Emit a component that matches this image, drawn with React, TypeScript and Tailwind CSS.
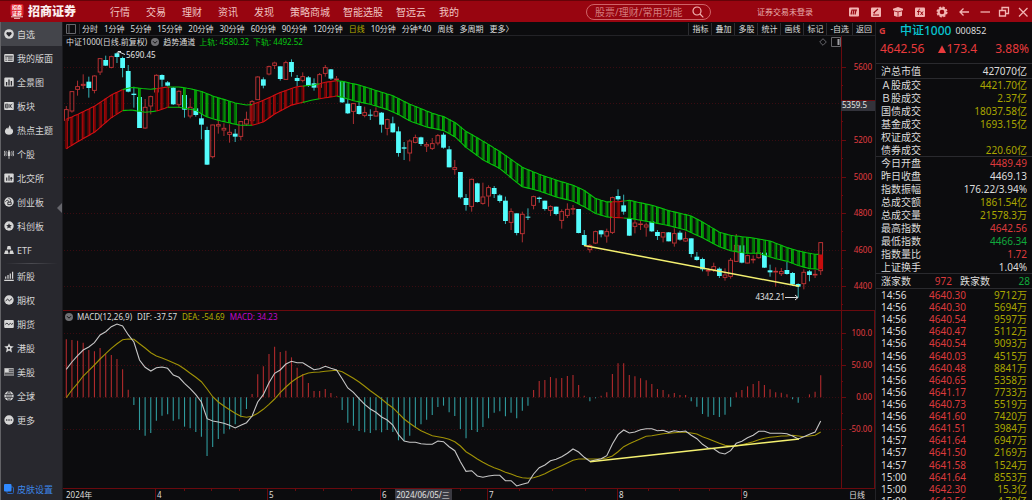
import React from "react";

const RED = "#c63436";
const CYAN = "#54fcfc";
const AXIS = "#6a0a0e";

/* ---------- price and indicator data (y values are in thirds of a pixel) ---------- */

type Candle = { up: boolean; high: number; top: number; bottom: number; low: number };

const parse = (base: number, text: string): Candle[] =>
  text
    .trim()
    .split(/\s*[;\n]\s*/)
    .map((row) => {
      const [kind, ...v] = row.split(" ");
      const [high, top, bottom, low] = v.map((n) => (base + Number(n)) / 3);
      return { up: kind === "r", high, top, bottom, low };
    });

const candles: Candle[] = [
  ...parse(
    135,
    `r 183 193 227 227;r 139 139 199 203;r 107 124 134 152;r 88 117 122 132;c 95 110 129 158;r 90 92 137 145
r 40 40 82 90;c 32 45 62 63;r 32 34 68 70;c 22 25 36 54;c 35 39 69 97;c 60 78 140 142;c 125 146 150 188
c 156 156 249 249;r 162 186 250 252;r 152 154 184 208;r 88 90 142 143;c 88 90 104 125;c 108 112 122 124
c 126 128 178 180;r 136 138 180 188;c 140 150 194 218;r 160 186 214 220;c 175 190 210 215;c 200 220 239 283
c 245 255 359 360;r 238 239 336 340;r 225 238 244 266;r 235 249 256 273;r 238 261 269 293;c 252 266 275 291
r 228 229 275 286;r 200 222 238 243;r 165 169 228 232;r 93 95 165 165;c 97 103 122 130;r 62 64 88 91
r 50 53 62 72;c 64 64 102 107;r 47 52 104 105;c 43 51 81 95;c 90 99 108 124;r 82 94 107 112;c 93 97 122 126
c 100 115 128 137;r 84 88 128 130;r 60 67 86 95;c 72 73 101 105;r 93 101 105 110`,
  ),
  ...parse(
    240,
    `c 4 4 67 69;c 55 71 100 102;r 69 70 95 132;c 66 78 102 104;r 80 97 107 112;c 88 104 107 120;r 82 94 109 110
c 96 98 134 158;r 116 118 146 166;c 110 130 157 158;c 140 154 219 230;c 186 202 206 240;r 178 182 220 244
r 164 172 188 190;c 170 172 192 198;r 186 193 199 216;r 174 190 206 210;r 162 166 190 196;c 158 164 203 206
c 198 208 262 262;r 240 262 269 284;c 276 276 352 356;c 342 354 375 392;r 296 297 380 395;c 308 310 366 368
r 308 350 371 374;r 316 322 349 380;c 318 324 342 354;c 342 346 363 368;c 350 362 423 432;r 385 394 428 450
c 400 400 459 466;r 395 402 462 487;c 385 410 413 420;r 347 349 377 388;c 350 353 357 368;c 362 362 387 392
r 376 379 392 408;c 380 380 402 406;r 388 394 422 446;r 370 387 407 414;r 375 385 388 404;c 387 387 459 460`,
  ),
  ...parse(
    510,
    `c 180 195 225 228;r 222 226 240 248;r 182 184 220 222;c 180 181 193 202;r 176 184 199 218;r 80 82 188 192
c 58 78 88 92;c 74 106 125 134;c 145 145 197 198;r 150 158 170 190;r 148 161 164 180;r 158 164 172 200
c 152 154 184 186;c 180 186 198 210;r 186 187 202 217;c 186 187 214 214;r 175 190 220 230;c 182 188 209 212
r 185 205 214 216;c 205 205 252 262;c 246 260 270 272;c 263 267 298 304;r 294 300 304 318;r 278 289 300 306
c 292 296 318 324;r 295 314 323 332;r 264 270 320 326;r 192 225 275 276;c 226 226 278 280;r 254 256 280 281
r 256 267 270 280;r 236 247 264 266;c 246 248 293 294;c 284 301 307 320;r 292 303 307 350;r 294 304 312 318
c 276 300 312 314;c 306 309 343 348;c 340 342 350 383;r 298 306 342 358;c 300 304 315 334;r 300 312 316 324
r 216 217 303 315`,
  ),
];

const xOf = (i: number) => 66.3 + i * 5.63;

const points = (ox: number, oy: number, list: number[][]) =>
  list.map(([x, y]) => [ox + x / 3, oy + y / 3]);

const bandTop = [
  ...points(60, 45, [[10, 227], [19, 223], [53, 208], [103, 184], [154, 150], [187, 134], [215, 127], [272, 133], [323, 126], [357, 126], [390, 131], [424, 139], [458, 153], [491, 163], [526, 174], [559, 180], [576, 179], [610, 166], [661, 142], [711, 125], [762, 120], [796, 112], [830, 107]]),
  ...points(340, 80, [[7, 4], [57, 15], [107, 31], [158, 47], [192, 64], [210, 73], [243, 86], [277, 100], [311, 110], [346, 128], [378, 154], [430, 184], [480, 215], [513, 238], [547, 262], [598, 283], [648, 300], [700, 316]]),
  ...points(580, 170, [[12, 61], [46, 85], [81, 96], [115, 95], [148, 91], [217, 106], [267, 122], [334, 138], [369, 157], [419, 187], [452, 196], [520, 204], [570, 213], [622, 233], [656, 243], [704, 253], [740, 254]]),
];
const bandBottom = [
  ...points(60, 45, [[10, 315], [19, 311], [53, 290], [103, 262], [154, 218], [187, 197], [215, 195], [256, 202], [290, 198], [323, 187], [357, 187], [407, 196], [441, 216], [475, 226], [540, 241], [576, 241], [610, 231], [644, 207], [695, 180], [762, 164], [830, 153]]),
  ...points(340, 80, [[7, 52], [40, 62], [91, 73], [141, 88], [176, 104], [210, 123], [260, 141], [311, 152], [346, 171], [378, 202], [430, 240], [480, 266], [530, 307], [547, 320], [598, 333], [648, 351], [700, 364]]),
  ...points(580, 170, [[12, 110], [46, 130], [81, 141], [115, 143], [148, 145], [217, 157], [267, 167], [317, 180], [369, 204], [419, 231], [452, 242], [500, 250], [537, 250], [587, 266], [622, 274], [656, 287], [689, 296], [740, 299]]),
];

const yAt = (line: number[][], x: number) => {
  for (let k = 1; k < line.length; k++) {
    if (x <= line[k][0]) {
      const [x0, y0] = line[k - 1];
      const [x1, y1] = line[k];
      return y0 + ((y1 - y0) * (x - x0)) / (x1 - x0);
    }
  }
  return line[line.length - 1][1];
};

const runs: { from: number; to: number; up: boolean }[] = [
  { from: 0, to: 10, up: true },
  { from: 10, to: 16, up: false },
  { from: 16, to: 18, up: true },
  { from: 18, to: 33, up: false },
  { from: 33, to: 42, up: true },
  { from: 42, to: 45, up: false },
  { from: 45, to: 48, up: true },
  { from: 48, to: 97, up: false },
  { from: 97, to: 99, up: true },
  { from: 99, to: 133.6, up: false },
];
const unfilled = new Set([11, 12, 14, 15, 19, 20, 22, 31, 32, 43, 44, 99]);
const redFilled = (i: number) =>
  i <= 10 || (i >= 16 && i <= 18) || (i >= 33 && i <= 42) || (i >= 45 && i <= 48) || i === 97 || i === 98 || i === 134;

const bandPath = (line: number[][], from: number, to: number) => {
  const out: string[] = [];
  for (let i = from; i < to; i += 0.5) out.push(`${xOf(i).toFixed(1)},${yAt(line, xOf(i)).toFixed(1)}`);
  out.push(`${xOf(to).toFixed(1)},${yAt(line, xOf(to)).toFixed(1)}`);
  return out.join(" ");
};

const nums = (s: string) => s.trim().split(/\s+/).map((n) => 310 + Number(n) / 3);

const hist = nums(`88 90 92 98 120 124 114 132 135 147 178 239 285 360 377 369 332 317 313 332 328 350 355 366 380 438
411 387 371 358 343 322 297 252 193 169 132 110 126 122 142 173 192 219 243 243 237 249 259 300 338 347 363 367 369
361 367 360 366 391 393 377 352 343 329 315 291 287 307 318 357 385 360 366 351 325 308 304 319 308 325 302 287 240
213 210 201 205 204 198 195 225 257 274 265 257 247 192 160 160 195 199 205 211 222 237 240 253 249 255 255 274 290
312 320 315 321 314 290 247 240 229 222 213 225 238 247 248 253 268 278 262 253 245 196`);

const dif = nums(`178 156 137 120 111 98 75 65 50 42 48 74 96 150 172 183 173 171 175 195 202 220 236 254 276 326 333
336 340 346 354 346 338 318 276 254 218 190 180 162 154 158 158 169 179 176 169 175 180 206 234 247 266 283 297 307
321 330 345 374 393 397 397 401 403 403 393 395 410 422 455 484 482 498 502 498 496 496 512 512 528 523 518 492 473
465 452 448 440 430 417 426 442 454 450 446 437 402 374 360 369 366 359 356 356 362 361 367 362 365 363 376 386 403
414 416 428 432 422 400 394 383 376 364 364 370 370 370 371 378 387 380 373 366 333`);

const dea = nums(`263 240 220 198 182 165 147 131 115 101 89 87 88 101 114 128 138 144 151 158 166 177 190 202 215 237
260 276 288 299 310 319 322 319 310 298 283 267 248 231 216 204 195 189 187 186 184 182 181 185 195 205 216 229 242
254 267 281 293 310 327 340 352 362 370 377 380 383 388 395 408 425 436 447 457 466 473 479 487 492 499 503 505 503
498 491 482 475 467 459 451 447 447 447 447 446 444 438 425 410 401 394 386 379 377 374 371 370 368 367 367 369 372
380 386 393 400 406 408 408 404 400 395 389 385 382 380 378 378 376 378 380 378 376 366`);

const linePoints = (v: number[]) => v.map((y, i) => `${xOf(i).toFixed(1)},${y.toFixed(1)}`).join(" ");

const textFont = "font-['Noto_Sans','Noto_Sans_CJK_SC',sans-serif]";

/* ---------- charts ---------- */

function PriceChart() {
  const levels: [number, string][] = [
    [67, "5600"], [103, ""], [140, "5200"], [177, "5000"], [213, "4800"], [250, "4600"], [286, "4400"],
  ];
  return (
    <svg viewBox="63 48 812 262" className="block w-full" role="img" aria-label="日线">
      {levels.map(([y, label]) => (
        <g key={y}>
          <line x1="64" x2="841" y1={y + 0.5} y2={y + 0.5} stroke="#4a0c12" strokeWidth="1" strokeDasharray="1 2" opacity="0.75" />
          <line x1="841" x2="846" y1={y + 0.5} y2={y + 0.5} stroke={AXIS} />
          <line x1="841" x2="843" y1={y + 18.5} y2={y + 18.5} stroke={AXIS} />
          {label && (
            <text x="872" y={y + 3} textAnchor="end" fontSize="8" fill="#e03c40">
              {label}
            </text>
          )}
        </g>
      ))}
      <line x1="841.5" x2="841.5" y1="48" y2="310" stroke={AXIS} />
      <rect x="841" y="100" width="34" height="11" fill="#33333b" />
      <line x1="841" x2="875" y1="100.5" y2="100.5" stroke={AXIS} />
      <text x="842" y="108" fontSize="8" fill="#e4e4e4">5359.5</text>

      {candles.map((c, i) => {
        const x = xOf(i);
        const h = Math.max(c.bottom - c.top, 1);
        return c.up ? (
          <g key={i} stroke={RED} fill="none">
            <line x1={x} x2={x} y1={c.high} y2={c.top} opacity="0.85" />
            <line x1={x} x2={x} y1={c.bottom} y2={c.low} opacity="0.85" />
            <rect x={x - 1.9} y={c.top + 0.3} width="3.8" height={Math.max(h - 0.6, 0.6)} strokeWidth="0.9" />
          </g>
        ) : (
          <g key={i}>
            <line x1={x} x2={x} y1={c.high} y2={c.low} stroke="#35b4b8" />
            <rect x={x - 2.4} y={c.top} width="4.8" height={h} fill={CYAN} />
          </g>
        );
      })}

      {candles.map((_, i) => {
        if (unfilled.has(i)) return null;
        const x = xOf(i);
        const y0 = yAt(bandTop, x);
        const y1 = yAt(bandBottom, x);
        const red = redFilled(i);
        const last = i === 134;
        const wide = i % 2 === 0;
        return (
          <g key={i}>
            <rect
              x={last ? x - 2.3 : x - 1.4}
              y={y0}
              width={last ? 4.6 : 2.8}
              height={y1 - y0}
              fill={red ? (last ? "#c80d0d" : wide ? "#620506" : "#780506") : wide ? "#036a05" : "#049206"}
            />
            {!last && <rect x={x + (wide ? 0.6 : -1.4)} y={y0} width="0.9" height={y1 - y0} fill={red ? "#b40a0c" : "#05b009"} />}
          </g>
        );
      })}
      {runs.map((r) => (
        <g key={r.from} fill="none" stroke={r.up ? "#d10f12" : "#07c20b"} strokeWidth="1.1">
          <polyline points={bandPath(bandTop, r.from, r.to)} />
          <polyline points={bandPath(bandBottom, r.from, r.to)} />
        </g>
      ))}

      <line x1="584" y1="245.5" x2="799" y2="286.3" stroke="#f4f070" strokeWidth="1.5" />
      <g stroke="#dcdcdc" fill="none" strokeWidth="1">
        <path d="M118 51.5 L125 54.5 M118 54.5 V51.5 H121" />
        <path d="M785 297.5 H798 M795 295 L798 297.5 L795 300" />
      </g>
      <text x="126" y="58" fontSize="8" fill="#e4e4e4">5690.45</text>
      <text x="785" y="300" textAnchor="end" fontSize="8" fill="#e4e4e4">4342.21</text>
    </svg>
  );
}

function MacdChart() {
  const levels: [number, string][] = [
    [333, "100.0"], [365, "50.00"], [397, "0.00"], [429, "-50.00"],
  ];
  return (
    <svg viewBox="63 322 812 167" className="block w-full" role="img" aria-label="MACD">
      {levels.map(([y, label]) => (
        <g key={y}>
          <line x1="64" x2="841" y1={y + 0.5} y2={y + 0.5} stroke="#4a0c12" strokeDasharray="1 2" opacity="0.75" />
          <line x1="841" x2="846" y1={y + 0.5} y2={y + 0.5} stroke={AXIS} />
          <line x1="841" x2="843" y1={y + 16.5} y2={y + 16.5} stroke={AXIS} />
          <text x="872" y={y + 3} textAnchor="end" fontSize="8" fill="#e03c40">
            {label}
          </text>
        </g>
      ))}
      {hist.map((y, i) => (
        <line
          key={i}
          x1={xOf(i)}
          x2={xOf(i)}
          y1="397.3"
          y2={y}
          stroke={y < 397.3 ? "#b02a2c" : "#2f9a9d"}
          strokeWidth="1.1"
        />
      ))}
      <polyline points={linePoints(dea)} fill="none" stroke="#a09206" strokeWidth="1.1" />
      <polyline points={linePoints(dif)} fill="none" stroke="#c6c6c6" strokeWidth="1.1" />
      <line x1="590" y1="461.7" x2="799" y2="439" stroke="#f4f070" strokeWidth="1.5" />
      <path d="M841.5 322 V488.5 M63 488.5 H875 M874.5 322 V488.5" stroke={AXIS} fill="none" />
    </svg>
  );
}

function DateAxis() {
  const months: [number, string][] = [[156, "4"], [268, "5"], [381, "6"], [488, "7"], [618, "8"], [742, "9"]];
  const minor = [185, 212, 240, 296, 324, 352, 461, 520, 553, 586, 649, 680, 710];
  return (
    <svg viewBox="63 489 812 11" className="block w-full" role="img" aria-label="日期">
      <text x="66" y="498" fontSize="8" fill="#dcdcdc">2024年</text>
      {months.map(([x, label]) => (
        <g key={label}>
          <line x1={x - 0.5} x2={x - 0.5} y1="489" y2="500" stroke={AXIS} />
          <text x={x + 1} y="498" fontSize="8" fill="#dcdcdc">{label}</text>
        </g>
      ))}
      {minor.map((x) => (
        <line key={x} x1={x - 0.5} x2={x - 0.5} y1="489" y2="491" stroke={AXIS} />
      ))}
      <rect x="395" y="489" width="57" height="11" fill="#3a3a42" />
      <text x="423" y="498" textAnchor="middle" fontSize="8" fill="#e4e4e4">2024/06/05/三</text>
      <text x="849" y="498" fontSize="8" fill="#dcdcdc">日线</text>
    </svg>
  );
}

/* ---------- sidebar ---------- */

const K = "#28282e";
const icons: Record<string, React.ReactNode> = {
  自选: (<><circle cx="5" cy="5" r="4.8" /><path fill={K} d="M5 7.8 2.6 5.3a1.4 1.4 0 0 1 2.4-1.7 1.4 1.4 0 0 1 2.4 1.7z" /></>),
  我的版面: (<><rect x="0.2" y="1" width="9.6" height="8" rx="1" /><path stroke={K} strokeWidth="0.9" d="M1.2 3.2h7.6M1.4 5h1.4M3.8 5h4.8M1.4 7.2h1.4M3.8 7.2h4.8" /></>),
  全景图: (<><rect x="0.3" y="0.6" width="9.4" height="9" rx="1.2" /><path stroke={K} strokeWidth="1.3" d="M2.6 8.6V5M5 8.6V2.6M7.4 8.6V4" /></>),
  板块: (<><rect x="0.2" y="1" width="9.6" height="8" rx="0.8" /><path stroke={K} strokeWidth="0.8" fill="none" d="M1.6 3.2h2.5v3.6H1.6zM1.6 5h2.5M5.9 3v4M8.3 3 6 5l2.3 2" /></>),
  热点主题: (<path d="M5.2.2C5.6 2 4 2.6 4.2 4 3.4 3.6 3.4 2.9 3.4 2.6 1.6 4 .9 5.2.9 6.5.9 8.5 2.8 9.8 5 9.8s4.1-1.3 4.1-3.3c0-1.4-.6-2.4-1.4-3.3 0 .6-.3 1-.8 1.2C7.1 2.6 6.5 1 5.2.2z" />),
  个股: (<><rect x="3.8" y="2.6" width="2.4" height="4.4" rx=".4" /><path stroke="#d6d6d6" strokeWidth=".9" fill="none" d="M5 1v8.8M2.4 2.4C1.7 3.8 1.7 5.2 2.4 6.6M.9 1.8C-.1 3.8.1 5.8 1 7.2M7.6 2.4c.7 1.4.7 2.8 0 4.2M9.1 1.8c1 2 .8 4-.1 5.4" /></>),
  北交所: (<><rect x="0.3" y="0.6" width="9.4" height="9" rx="1" /><path stroke={K} strokeWidth="1.1" d="M2.7 7.8V4.4M5 7.8V2.6M7.2 7.8V4M6.2 5.4h2.2" /></>),
  创业板: (<><circle cx="5" cy="5" r="4.7" /><path stroke={K} strokeWidth=".9" fill="none" d="M1.4 4.6C3 2.6 4.8 3 4.8 5.2M4.4 1.2C6.4 2 7.6 3.4 6.4 5M3.8 5.2h3.4v2.4H3.8z" /></>),
  科创板: (<><circle cx="5" cy="5" r="4.7" /><path fill={K} d="M5 2.2l.8 1.8 2 .2-1.5 1.3.5 2L5 6.4 3.2 7.5l.5-2L2.2 4.2l2-.2z" /></>),
  ETF: (<path d="M3.6 1h2.8l.9 3.4H2.7zM1.2 5.4h2.6L4.7 9H.1zM6.2 5.4h2.6L9.9 9H5.3z" />),
  新股: (<path stroke="#d6d6d6" strokeWidth="1.2" d="M.2 9.3h9.6M1.7 7.8V5.4M4 7.8V4M6.3 7.8V2.6M8.6 7.8V.8" />),
  期权: (<><circle cx="5" cy="5" r="4.7" /><path stroke={K} strokeWidth="1" fill="none" d="M1.6 5.9 3.6 4.2 5.4 5.8 8 3.6" /></>),
  期货: (<><rect x="0.2" y="1" width="9.6" height="8" rx="1" /><path stroke={K} strokeWidth=".9" fill="none" d="M1.2 5.4 3 4l1.6 1.8L6.4 4.4l1.2 1L9 4.3" /></>),
  港股: (<><path d="M5 .2l1.3 2.9 3.5.3-2.6 2.2.8 3.8L5 7.4 2 9.4l.8-3.8L.2 3.4l3.5-.3z" /><circle cx="5" cy="5.2" r="1.1" fill={K} /></>),
  美股: (<><rect x="0.2" y="1" width="9.6" height="8" rx=".6" opacity=".75" /><path stroke={K} strokeWidth=".7" d="M5 2.8h4.4M5 4.6h4.4M.8 6.4h8.6M.8 8h8.6" /><rect x="1" y="1.8" width="3.4" height="3.2" /></>),
  全球: (<><circle cx="5" cy="5" r="4.7" /><path stroke={K} strokeWidth=".7" fill="none" d="M.4 3.6h9.2M.4 6.4h9.2M5 .3v9.4M5 .3C2.2 3 2.2 7 5 9.7 7.8 7 7.8 3 5 .3" /></>),
  更多: (<><circle cx="5" cy="5" r="4.7" /><g fill={K}><circle cx="2.7" cy="5" r=".8" /><circle cx="5" cy="5" r=".8" /><circle cx="7.3" cy="5" r=".8" /></g></>),
};

function SideItem({ name, active = false }: { name: string; active?: boolean }) {
  return (
    <button className={`flex h-6 w-full shrink-0 items-center gap-[3px] pl-[3px] text-[9px] leading-none text-[#d6d6d6] ${active ? "bg-[#44454b]" : ""}`}>
      <svg viewBox="0 0 10 10" className="size-[10px] shrink-0" fill="#d6d6d6" aria-hidden="true">{icons[name]}</svg>
      <span className="whitespace-nowrap">{name}</span>
    </button>
  );
}

function Sidebar() {
  return (
    <aside className="relative flex w-[63px] shrink-0 flex-col border-r border-l border-r-[#1b1b1f] border-l-[#626266] bg-[#28282e]">
      {["自选", "我的版面", "全景图", "板块", "热点主题", "个股", "北交所", "创业板", "科创板", "ETF"].map((n) => (
        <SideItem key={n} name={n} active={n === "自选"} />
      ))}
      <div className="mx-1 mt-px h-px shrink-0 bg-gradient-to-r from-transparent via-[#4a4a50] to-transparent" />
      {["新股", "期权", "期货", "港股", "美股", "全球", "更多"].map((n) => (
        <SideItem key={n} name={n} />
      ))}
      <button className="mt-auto flex h-[22px] shrink-0 items-center gap-[3px] pl-[3px] text-[9px] leading-none text-[#3c86e8]">
        <svg viewBox="0 0 10 10" className="size-[10px] shrink-0" aria-hidden="true">
          <rect x="3" y="3" width="6.5" height="6.5" rx="1" fill="none" stroke="#2a62b8" />
          <rect x="0" y="0" width="7.5" height="7.5" rx="1" fill="#3089ff" />
        </svg>
        <span className="whitespace-nowrap">皮肤设置</span>
      </button>
      <button aria-label="收起" className="absolute top-[181px] right-0">
        <svg viewBox="0 0 5 10" className="h-[10px] w-[5px]" aria-hidden="true"><path d="M5 0v10L0 5z" fill="#66666c" /></svg>
      </button>
    </aside>
  );
}

/* ---------- header ---------- */

const P = "#f2b4b2";
const A = "#980510";
const windowIcons: [string, string, React.ReactNode][] = [
  ["行情", "w-[22px]", <><rect x="1" y="1.5" width="10" height="9" rx="1" fill={P} /><path stroke={A} strokeWidth="1.2" fill="none" d="M3 8.5 4 4h2L5 8.5M6 4h3M8 4 7 8.5" /></>],
  ["编辑", "w-[22px]", <><rect x="1" y="1.5" width="10" height="9.5" rx="1" fill={P} /><path stroke={A} strokeWidth="1.1" fill="none" d="M3.5 7 8 3M3 9h6M3.5 7h1.5" /></>],
  ["工具箱", "w-[22px]", <><path d="M6 1l5 1.800v1.400L6 5.600 1 4.200V2.800zM2 5.300l3.600 1V11L2 9.800zM10 5.300l-3.600 1V11L10 9.800z" fill={P} /></>],
  ["公式", "w-[22px]", <><rect x="1" y="1.5" width="10" height="9.5" rx="1" fill={P} /><path stroke={A} strokeWidth="1" fill="none" d="M6 3.2C4.6 3 4.6 4.2 4.3 9M3 5.5h2.800M6.500 5.500l2.500 3.500M9 5.500 6.500 9" /></>],
  ["设置", "w-[22px]", <><circle cx="6" cy="6" r="3.4" fill="none" stroke={P} strokeWidth="2.2" /><circle cx="6" cy="6" r="4.800" fill="none" stroke={P} strokeWidth="1.500" strokeDasharray="2.200 1.570" /></>],
  ["返回", "w-[22px]", <path stroke={P} strokeWidth="1.3" fill="none" d="M11 6H2M5.500 2.500 2 6l3.500 3.500" />],
  ["最小化", "w-[19px]", <path stroke={P} strokeWidth="1.300" d="M1.500 6h9.500" />],
  ["还原", "w-[19px]", <path stroke={P} strokeWidth="1.300" fill="none" d="M1.500 4.500h6V10h-6zM4 4.500V1.500h6.500v6H7.500" />],
  ["关闭", "w-[19px]", <path stroke={P} strokeWidth="1.300" d="M2 2l8.500 8.500M10.500 2 2 10.500" />],
];

function Header() {
  return (
    <header className="flex h-[22px] shrink-0 items-center border-t border-[#650308] bg-[#980510] text-[10px] leading-none text-[#f0c4c2]">
      <div className="flex w-[110px] shrink-0 items-center gap-1 pl-[10px]">
        <svg viewBox="0 0 14 15" className="h-[15px] w-[14px]" aria-hidden="true">
          <rect x="0.5" y="0" width="13" height="12" rx="2" fill="#e0202c" />
          <text x="7" y="5.2" textAnchor="middle" fontSize="5" fontWeight="700" fill="#fff">招商</text>
          <text x="7" y="11" textAnchor="middle" fontSize="5" fontWeight="700" fill="#fff">证券</text>
          <path d="M1 12.8h12M4 14.3h6" stroke="#f3cfcd" strokeWidth="1" />
        </svg>
        <span className="text-[12px] font-black whitespace-nowrap text-[#fbeeee]">招商证券</span>
      </div>
      <nav className="flex items-center gap-4 whitespace-nowrap">
        {["行情", "交易", "理财", "资讯", "发现"].map((n) => (
          <button key={n}>{n}</button>
        ))}
        <div className="flex items-center gap-[13px]">
          {["策略商城", "智能选股", "智远云", "我的"].map((n) => (
            <button key={n}>{n}</button>
          ))}
        </div>
      </nav>
      <label className="mr-[46px] ml-auto flex h-4 w-[125px] items-center rounded-full border border-[#cf6468] pr-[6px] pl-2">
        <input aria-label="搜索" placeholder="股票/理财/常用功能" className="w-0 flex-1 bg-transparent text-[10px] leading-none outline-none placeholder:text-[#d37a7c]" />
        <svg viewBox="0 0 12 12" className="size-3 shrink-0" fill="none" stroke={P} strokeWidth="1.2" aria-hidden="true">
          <circle cx="5" cy="5" r="4" /><path d="M8 8l3.3 3.3" />
        </svg>
      </label>
      <button className="mr-[30px] text-[8px] whitespace-nowrap text-[#e8b0ae]">证券交易未登录</button>
      <div className="flex">
        {windowIcons.map(([label, width, art]) => (
          <button key={label} aria-label={label} className={`flex justify-center ${width}`}>
            <svg viewBox="0 0 12 12" className="size-3" aria-hidden="true">{art}</svg>
          </button>
        ))}
      </div>
    </header>
  );
}

function Toolbar() {
  const periods = ["分时", "1分钟", "5分钟", "15分钟", "20分钟", "30分钟", "60分钟", "90分钟", "120分钟", "日线", "10分钟", "分钟*40", "周线", "多周期", "更多〉"];
  const tools = ["指标", "叠加", "多股", "统计", "画线", "标记", "-自选", "返回"];
  return (
    <div className="flex h-[14px] shrink-0 items-center border-b border-[#232327] text-[8px] leading-none whitespace-nowrap text-[#dcdcdc]">
      <button aria-label="布局" className="flex w-[17px] justify-center border-r border-[#2c2c30]">
        <svg viewBox="0 0 10 10" className="size-[10px]" fill="none" stroke="#66666b" aria-hidden="true"><path d="M.5.5h9v9h-9zM3 .5v9" /></svg>
      </button>
      <div className="flex gap-[6px] pl-[2px]">
        {periods.map((p) => (
          <button key={p} className={p === "日线" ? "text-[#b6ac00]" : ""}>{p}</button>
        ))}
      </div>
      <div className="ml-auto flex">
        {tools.map((t) => (
          <button key={t} className="border-l border-[#2c2c30] px-[3px] py-[2px]">{t}</button>
        ))}
      </div>
    </div>
  );
}

const Chevron = () => (
  <svg viewBox="0 0 8 8" className="size-2 shrink-0" aria-hidden="true">
    <circle cx="4" cy="4" r="4" fill="#707074" /><path d="M2 3.2 4 5.2 6 3.2" stroke="#111" fill="none" />
  </svg>
);

/* ---------- quote panel ---------- */

const W = "text-[#dcdcdc]";
const Y = "text-[#aaa600]";
const R = "text-[#dc3a3c]";
const G = "text-[#10a83c]";

function Rows({ rows, className }: { rows: [string, string, string][]; className: string }) {
  return (
    <table className={`w-full shrink-0 border-b border-[#2a2a2e] ${className}`}>
      <tbody>
        {rows.map(([label, value, tone]) => (
          <tr key={label}>
            <th scope="row" className="py-0 pl-[5px] text-left font-normal text-[#dcdcdc]">{label}</th>
            <td className={`py-0 pr-[5px] text-right ${tone}`}>{value}</td>
          </tr>
        ))}
      </tbody>
    </table>
  );
}

const trades: [string, string, string][] = [
  ["14:56", "4640.30", "9712万"], ["14:56", "4640.30", "5694万"], ["14:56", "4640.54", "9597万"],
  ["14:56", "4640.47", "5112万"], ["14:56", "4640.54", "9093万"], ["14:56", "4640.03", "4515万"],
  ["14:56", "4640.48", "8841万"], ["14:56", "4640.65", "5358万"], ["14:56", "4641.17", "7733万"],
  ["14:56", "4640.73", "5519万"], ["14:56", "4641.60", "7420万"], ["14:56", "4641.51", "3984万"],
  ["14:57", "4641.64", "6947万"], ["14:57", "4641.50", "2169万"], ["14:57", "4641.58", "1524万"],
  ["15:00", "4641.64", "8553万"], ["15:00", "4642.30", "15.3亿"], ["15:00", "4642.56", "4.79亿"],
];

function QuotePanel() {
  return (
    <aside className="flex w-[157px] shrink-0 flex-col overflow-hidden border-l border-[#232327] text-[10px] leading-[12px] whitespace-nowrap">
      <div className="flex h-[17px] shrink-0 items-center pl-[3px]">
        <span className="w-[21px] text-[9px] font-bold text-[#dc3a3c]">G</span>
        <h1 className="text-[12px] font-medium text-[#08c4d0]">中证1000</h1>
        <span className={`pl-1 text-[9px] ${W}`}>000852</span>
      </div>
      <div className="flex h-[25px] shrink-0 items-center justify-between border-b border-[#2a2a2e] pr-[3px] pb-[4px] pl-[4px] text-[12px] text-[#e83a3c]">
        <span>4642.56</span>
        <span className="flex items-center pr-1">
          <svg viewBox="0 0 8 8" className="size-2" aria-hidden="true"><path d="M4 .3 8 8H0z" fill="#e83a3c" /></svg>
          173.4
        </span>
        <span>3.88%</span>
      </div>
      <Rows className="h-[15px]" rows={[["沪总市值", "427070亿", W]]} />
      <Rows
        className="h-[78px]"
        rows={[["Ａ股成交", "4421.70亿", Y], ["Ｂ股成交", "2.37亿", Y], ["国债成交", "18037.58亿", Y], ["基金成交", "1693.15亿", Y], ["权证成交", "", Y], ["债券成交", "220.60亿", Y]]}
      />
      <Rows
        className="h-[117px]"
        rows={[["今日开盘", "4489.49", R], ["昨日收盘", "4469.13", W], ["指数振幅", "176.22/3.94%", W], ["总成交额", "1861.54亿", Y], ["总成交量", "21578.3万", Y], ["最高指数", "4642.56", R], ["最低指数", "4466.34", G], ["指数量比", "1.72", R], ["上证换手", "1.04%", W]]}
      />
      <div className="flex h-[15px] shrink-0 items-center border-b border-[#2a2a2e] pr-[2px] pl-[5px]">
        <span className={W}>涨家数</span>
        <span className={`w-[41px] text-right ${R}`}>972</span>
        <span className={`pl-[8px] ${W}`}>跌家数</span>
        <span className={`ml-auto ${G}`}>28</span>
      </div>
      <table className="h-[218px] w-full shrink-0 table-fixed">
        <tbody>
          {trades.map(([time, price, volume], i) => (
            <tr key={i}>
              <td className={`w-[40px] py-0 pl-[5px] ${W}`}>{time}</td>
              <td className={`w-[50px] py-0 text-right ${R}`}>{price}</td>
              <td className={`py-0 pr-[5px] text-right ${Y}`}>{volume}</td>
            </tr>
          ))}
        </tbody>
      </table>
    </aside>
  );
}

export default function App() {
  return (
    <div className={`flex h-screen flex-col overflow-hidden bg-[#0c0c0e] ${textFont}`}>
      <Header />
      <div className="flex min-h-0 flex-1">
        <Sidebar />
        <main className="flex min-w-0 flex-1 flex-col text-[8px] leading-none">
          <Toolbar />
          <div className="flex h-3 shrink-0 items-center gap-1 pl-[3px] whitespace-nowrap text-[#dcdcdc]">
            <span>中证1000(日线.前复权)</span>
            <Chevron />
            <span>趋势通道</span>
            <span className="text-[#08c810]">上轨: 4580.32</span>
            <span className="text-[#08c810]">下轨: 4492.52</span>
            <div className="ml-auto flex items-center gap-1">
              <svg viewBox="0 0 8 8" className="size-2" fill="none" stroke="#66666a" aria-hidden="true"><path d="M4 .7 7.3 4 4 7.3.7 4z" /></svg>
              <svg viewBox="0 0 10 10" className="size-[10px]" fill="none" stroke="#66666a" aria-hidden="true"><path d="M.5.5h9v9h-9z" /><path d="M7.500 2v6" stroke="#a0a0a4" strokeWidth="2" /></svg>
            </div>
            <div className="-ml-1 h-3 w-[34px] border-l border-[#6a0a0e]" />
          </div>
          <PriceChart />
          <div className="flex h-3 shrink-0 items-center gap-[5px] border-t border-[#6a0a0e] pl-[2px] whitespace-nowrap text-[#dcdcdc]">
            <Chevron />
            <span className="-ml-px">MACD(12,26,9)</span>
            <span>DIF: -37.57</span>
            <span className="text-[#b6ac00]">DEA: -54.69</span>
            <span className="text-[#c408c8]">MACD: 34.23</span>
            <div className="ml-auto h-3 w-[34px] border-x border-[#6a0a0e]" />
          </div>
          <MacdChart />
          <DateAxis />
        </main>
        <QuotePanel />
      </div>
    </div>
  );
}
